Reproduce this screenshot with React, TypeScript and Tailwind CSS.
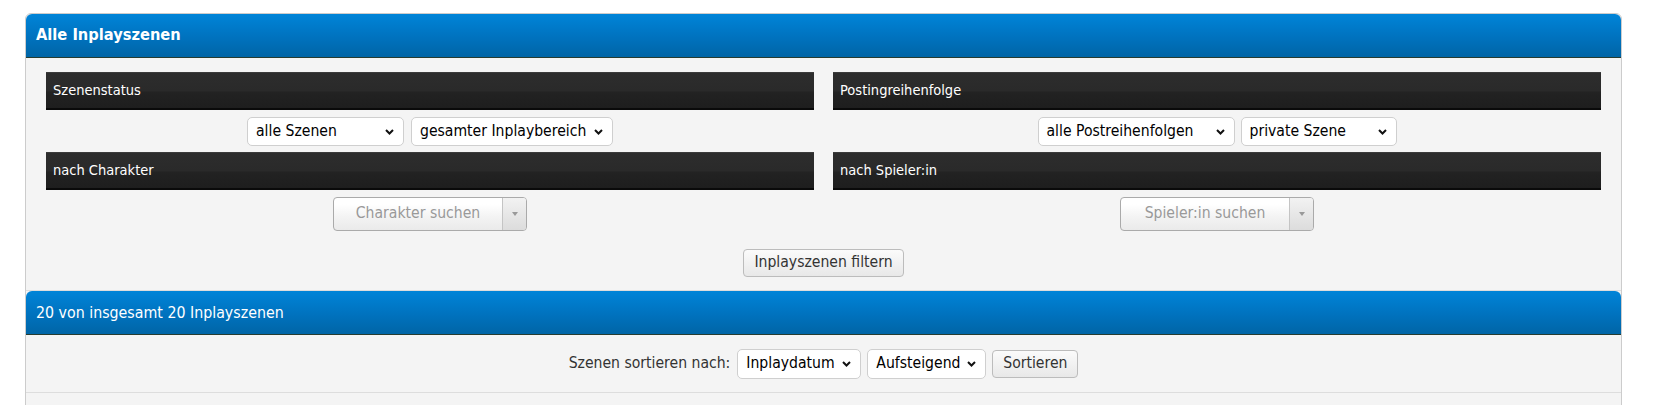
import { ReactNode } from "react";

const Chevron = () => (
  <svg width="9" height="6" viewBox="0 0 9 6" className="shrink-0">
    <path d="M1 1l3.5 3.5L8 1" fill="none" stroke="#111" strokeWidth="2" />
  </svg>
);

const FakeSelect = ({ label, width }: { label: string; width: string }) => (
  <div
    className={`flex items-center justify-between ${width} h-[29px] pl-[8px] pr-[9px] bg-white border border-[#cfcfcf] rounded-[5px] text-[15.6px] text-black`}
  >
    <span className="whitespace-nowrap">{label}</span>
    <Chevron />
  </div>
);

const ChosenSelect = ({ placeholder }: { placeholder: string }) => (
  <div className="flex w-[194px] h-[34px] border border-[#aaa] rounded-[4px] bg-[linear-gradient(#ffffff_20%,#f3f3f3_60%,#eaeaea)] overflow-hidden">
    <div className="flex-1 flex items-center justify-center text-[15.6px] text-[#999]">
      {placeholder}
    </div>
    <div className="w-[24px] flex items-center justify-center border-l border-[#c4c4c4] bg-[linear-gradient(#f2f2f2,#dcdcdc)]">
      <span className="block w-0 h-0 border-l-[3px] border-r-[3px] border-t-[4px] border-l-transparent border-r-transparent border-t-[#999]" />
    </div>
  </div>
);

const Button = ({ children, width }: { children: ReactNode; width: string }) => (
  <button
    className={`${width} h-[28px] flex items-center justify-center border border-[#bcbcbc] rounded-[4px] bg-[linear-gradient(#fbfbfb,#e8e8e8)] text-[15.6px] text-[#333]`}
  >
    {children}
  </button>
);

const DarkBar = ({ title }: { title: string }) => (
  <div className="h-[38px] flex items-center pl-[7px] border-t border-t-[#3b3b3b] border-b-2 border-b-[#0a0a0a] bg-[linear-gradient(#2d2d2d_0%,#2a2a2a_50%,#222222_56%,#1e1e1e_100%)] text-white text-[14.5px]">
    {title}
  </div>
);

const BlueHead = ({ children }: { children: ReactNode }) => (
  <div className="h-[44px] flex items-center pl-[10px] rounded-t-[6px] border-b border-b-[#263c30] bg-[linear-gradient(#0084d8,#0072be_55%,#0065a6)] text-white">
    {children}
  </div>
);

export default function App() {
  return (
    <div className="w-[1666px] h-[405px] bg-white overflow-hidden pt-[13px] font-['DejaVu_Sans_Condensed','DejaVu_Sans',sans-serif]">
      <div className="ml-[25px] w-[1597px] border border-[#cccccc] rounded-[6px] bg-[#f4f4f4] h-[420px]">
        <BlueHead>
          <span className="font-bold text-[16.3px]">Alle Inplayszenen</span>
        </BlueHead>

        {/* Filter */}
        <div className="px-[20px] pt-[14px] pb-[13px] border-b border-[#dddddd]">
          <div className="grid grid-cols-2 gap-x-[19px]">
            <div>
              <DarkBar title="Szenenstatus" />
              <div className="flex justify-center gap-[7px] mt-[7px]">
                <FakeSelect label="alle Szenen" width="w-[157px]" />
                <FakeSelect label="gesamter Inplaybereich" width="w-[202px]" />
              </div>
              <div className="mt-[6px]">
                <DarkBar title="nach Charakter" />
              </div>
              <div className="flex justify-center mt-[7px]">
                <ChosenSelect placeholder="Charakter suchen" />
              </div>
            </div>
            <div>
              <DarkBar title="Postingreihenfolge" />
              <div className="flex justify-center gap-[6px] mt-[7px]">
                <FakeSelect label="alle Postreihenfolgen" width="w-[197px]" />
                <FakeSelect label="private Szene" width="w-[156px]" />
              </div>
              <div className="mt-[6px]">
                <DarkBar title="nach Spieler:in" />
              </div>
              <div className="flex justify-center mt-[7px]">
                <ChosenSelect placeholder="Spieler:in suchen" />
              </div>
            </div>
          </div>
          <div className="flex justify-center mt-[18px]">
            <Button width="w-[161px]">Inplayszenen filtern</Button>
          </div>
        </div>

        <BlueHead>
          <span className="text-[15.8px]">20 von insgesamt 20 Inplayszenen</span>
        </BlueHead>

        {/* Sort */}
        <div className="flex items-center justify-center gap-[6px] pt-[14px] pb-[13px] border-b border-[#dddddd] text-[15.6px] text-[#333]">
          <span className="mr-[1px]">Szenen sortieren nach:</span>
          <div className="flex items-center justify-between w-[124px] h-[30px] pl-[8px] pr-[9px] bg-white border border-[#cfcfcf] rounded-[5px] text-black">
            <span>Inplaydatum</span>
            <Chevron />
          </div>
          <div className="flex items-center justify-between w-[119px] h-[30px] pl-[8px] pr-[9px] bg-white border border-[#cfcfcf] rounded-[5px] text-black">
            <span>Aufsteigend</span>
            <Chevron />
          </div>
          <Button width="w-[86px]">Sortieren</Button>
        </div>
      </div>
    </div>
  );
}
